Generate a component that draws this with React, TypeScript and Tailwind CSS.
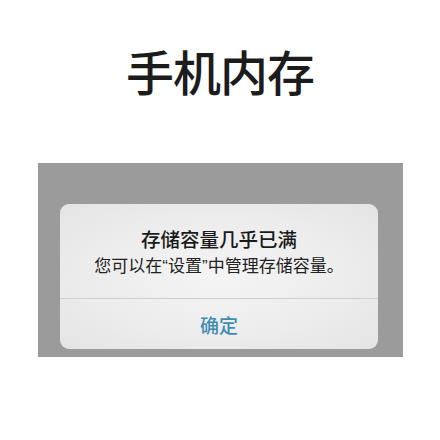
export default function App() {
  return (
    <div
      className="w-[440px] h-[440px] bg-white flex flex-col"
      style={{ fontFamily: '"Noto Sans CJK SC", "Noto Sans", sans-serif' }}
    >
      {/* heading */}
      <div className="pt-[46px] h-[163px] flex justify-center">
        <h1 className="text-[48px] leading-none font-medium text-[#1c1c1c] tracking-[-1px]">手机内存</h1>
      </div>

      {/* grey screen with alert */}
      <div className="ml-[38px] w-[365px] h-[194px] bg-[#9b9b9b] pt-[41px] pl-[22px] pr-[25px] pb-[8px]">
        <div className="h-full rounded-[9px] bg-[radial-gradient(ellipse_at_center,#f4f4f4_0%,#ececec_60%,#e4e4e4_100%)] flex flex-col overflow-hidden">
          <div className="h-[94px] flex flex-col items-center justify-center pt-[2px]">
            <div className="text-[19.5px] leading-[26px] font-medium text-[#1a1a1a]">存储容量几乎已满</div>
            <div className="text-[17px] leading-[22px] text-[#222] mt-[2px]">
              您可以在<span className="font-['Liberation_Sans']">“</span>设置<span className="font-['Liberation_Sans']">”</span>中管理存储容量。
            </div>
          </div>
          <div className="h-px bg-[#cfcfcf]" />
          <div className="flex-1 flex items-center justify-center">
            <span className="text-[19px] leading-none font-medium text-[#3f8db3]">确定</span>
          </div>
        </div>
      </div>
    </div>
  );
}
